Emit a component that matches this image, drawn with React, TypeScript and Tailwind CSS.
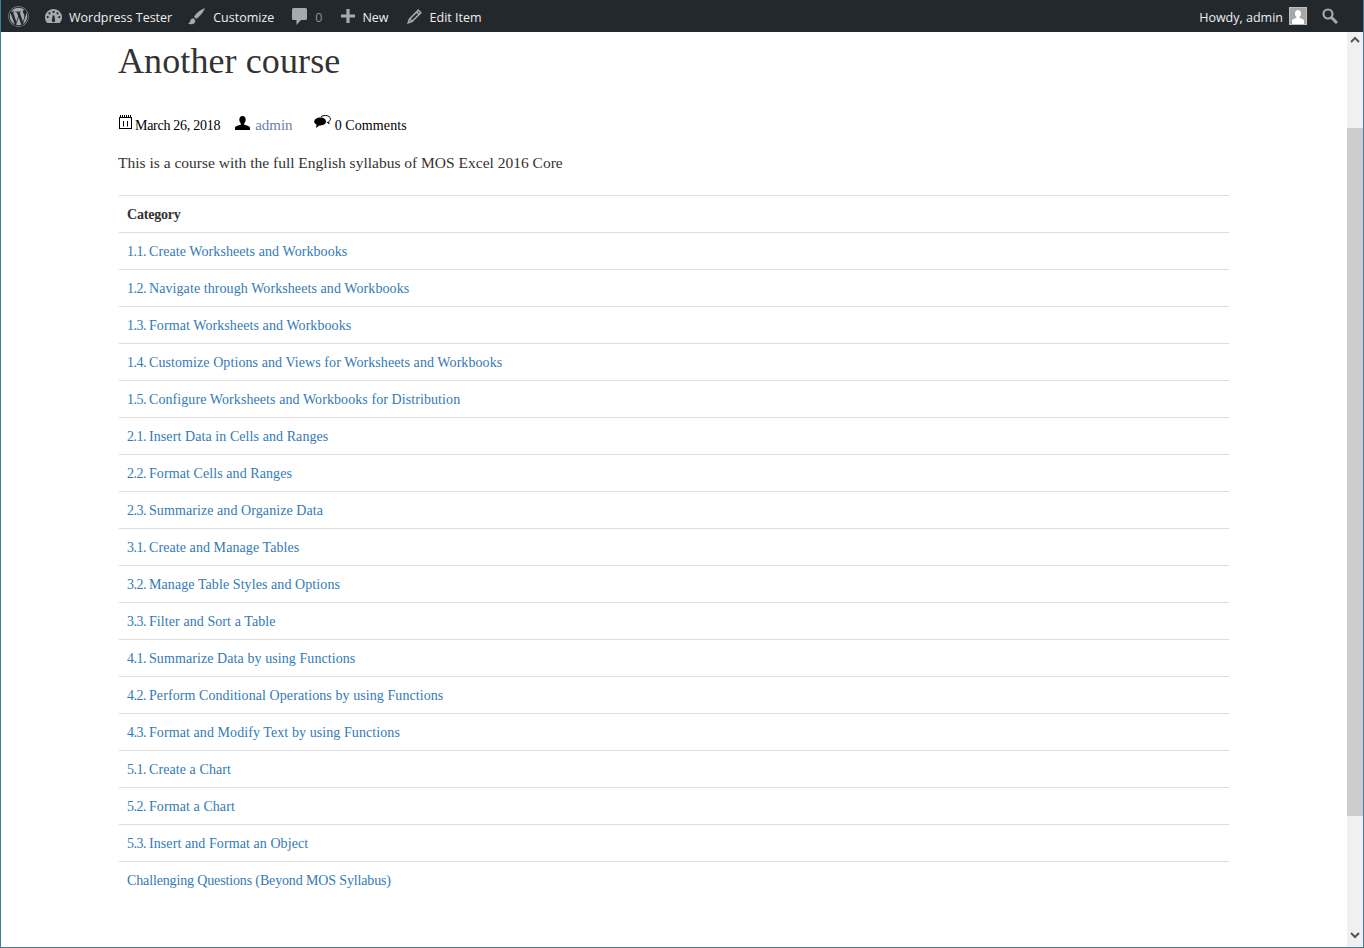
import { FaWordpress } from "react-icons/fa";

const rows = [
  ["1.1.", "Create Worksheets and Workbooks"],
  ["1.2.", "Navigate through Worksheets and Workbooks"],
  ["1.3.", "Format Worksheets and Workbooks"],
  ["1.4.", "Customize Options and Views for Worksheets and Workbooks"],
  ["1.5.", "Configure Worksheets and Workbooks for Distribution"],
  ["2.1.", "Insert Data in Cells and Ranges"],
  ["2.2.", "Format Cells and Ranges"],
  ["2.3.", "Summarize and Organize Data"],
  ["3.1.", "Create and Manage Tables"],
  ["3.2.", "Manage Table Styles and Options"],
  ["3.3.", "Filter and Sort a Table"],
  ["4.1.", "Summarize Data by using Functions"],
  ["4.2.", "Perform Conditional Operations by using Functions"],
  ["4.3.", "Format and Modify Text by using Functions"],
  ["5.1.", "Create a Chart"],
  ["5.2.", "Format a Chart"],
  ["5.3.", "Insert and Format an Object"],
];

const CalendarIcon = () => (
  <svg className="mb-[6px]" width="14" height="15" viewBox="0 0 14 15" fill="none" stroke="#000" strokeWidth="1">
    <path d="M1.500 0v2M3.500 0v2M5.500 0v2M7.500 0v2M9.500 0v2M11.500 0v2" />
    <rect x="0.500" y="2.500" width="12" height="11" />
    <path d="M4.500 6v5.500M8.500 6v5.500" />
  </svg>
);

const PersonIcon = () => (
  <svg className="mb-[5px]" width="15" height="14" viewBox="0 0 15 14" fill="#000">
    <path d="M7.500 0C9.500 0 10.700 1.500 10.700 3.600c0 1.500-.6 3-1.500 3.800v1.300c2.500.6 4.900 1.500 5.800 2.600V14H0v-2.700c.9-1.100 3.300-2 5.800-2.600V7.400c-.9-.8-1.500-2.300-1.500-3.800C4.300 1.500 5.500 0 7.500 0z" />
  </svg>
);

const CommentsIcon = () => (
  <svg className="mb-[6px]" width="17" height="14" viewBox="0 0 17 14">
    <path d="M6.500 2.500C3 2.500.2 4.200.2 6.500c0 1.400 1 2.500 2.400 3.200L2 13l3.400-2.600h1.200c3 0 5.400-1.700 5.400-3.900S9.800 2.500 6.500 2.500z" fill="#000" />
    <path d="M7 1.700C8 .9 9.500.5 11.300.5c2.900 0 5.200 1.500 5.200 3.400 0 1-.7 2-1.900 2.600l.5 2.200-2.200-1.700" fill="none" stroke="#000" />
  </svg>
);

const BubbleIcon = () => (
  <svg width="15" height="17" viewBox="0 0 15 17" fill="#a7aaad">
    <path d="M1.500 0h12A1.500 1.500 0 0 1 15 1.500v9a1.500 1.500 0 0 1-1.500 1.500H9l-4.500 5v-5h-3A1.500 1.500 0 0 1 0 10.500v-9A1.500 1.500 0 0 1 1.500 0z" />
  </svg>
);

const GaugeIcon = () => (
  <svg width="17" height="14" viewBox="0 0 17 14" fill="#a7aaad">
    <path fillRule="evenodd" d="M8.500 0C3.800 0 0 3.700 0 8.300c0 2 .7 3.900 1.900 5.300l.4.400h12.400l.4-.4A8.200 8.200 0 0 0 17 8.300C17 3.700 13.200 0 8.500 0zM8.500 1.800a1.100 1.100 0 1 1 0 2.200 1.100 1.100 0 0 1 0-2.200zM4.500 3.200a1.100 1.100 0 1 1 0 2.200 1.100 1.100 0 0 1 0-2.200zM12.500 3.200a1.100 1.100 0 1 1 0 2.200 1.100 1.100 0 0 1 0-2.200zM2.700 7a1.100 1.100 0 1 1 0 2.200 1.100 1.100 0 0 1 0-2.200zM14.300 7a1.100 1.100 0 1 1 0 2.200 1.100 1.100 0 0 1 0-2.200zM7.600 6.500l1.800 0 .6 4.500a1.600 1.600 0 1 1-3 0z" />
  </svg>
);

const BrushIcon = () => (
  <svg width="17" height="17" viewBox="0 0 17 17" fill="#a7aaad">
    <path d="M17 0c-3.500 1.200-8 4.500-10.300 7.800-.5.700-.6 1.100-.4 1.500l1.500 1.300c.5.200 1 0 1.600-.5C12.500 7.500 15.800 3.500 17 0z" />
    <path d="M5.300 10.300c-1.600.2-2.600 1-3 2.500C2 14.300 1.200 15 0 15.500c2.600 1.400 5.800 1 7-1.200.4-.8.4-1.600.1-2.300z" />
  </svg>
);

const PencilIcon = () => (
  <svg width="15" height="15" viewBox="0 0 15 15" fill="none" stroke="#a7aaad" strokeWidth="1.600">
    <path d="M11.300 1.200l2.500 2.500-8.900 8.900-3.700 1.200 1.200-3.700z" />
    <path d="M3.200 10.200l1.600 1.600" />
    <path d="M9.500 3l2.500 2.500" />
  </svg>
);

const PlusIcon = () => (
  <svg width="14" height="14" viewBox="0 0 14 14" fill="#a7aaad">
    <path d="M5.400 0h3.200v5.400H14v3.200H8.600V14H5.400V8.600H0V5.400h5.400z" />
  </svg>
);

const SearchIcon = () => (
  <svg width="16" height="16" viewBox="0 0 16 16" fill="none" stroke="#a7aaad">
    <circle cx="6" cy="6" r="4.500" strokeWidth="2.200" />
    <path d="M9.500 9.500l5.500 5.500" strokeWidth="3" />
  </svg>
);

const AvatarIcon = () => (
  <svg className="ml-[6px]" width="18" height="18" viewBox="0 0 18 18">
    <rect width="18" height="18" fill="#a7a7a7" />
    <rect x="0.500" y="0.500" width="17" height="17" fill="none" stroke="#bdbdbd" />
    <path d="M9 3c1.900 0 3 1.500 3 3.500 0 1.300-.5 2.700-1.400 3.500v1c1.700.4 3.800 1.200 4.400 2.300V17H3v-3.700c.6-1.100 2.700-1.900 4.400-2.300v-1C6.500 9.200 6 7.800 6 6.500 6 4.500 7.100 3 9 3z" fill="#fff" />
  </svg>
);

function BarItem({ icon, label, gap, muted }: { icon: React.ReactNode; label: string; gap: string; muted?: boolean }) {
  return (
    <div className={`flex items-center ${gap}`}>
      {icon}
      <span className={muted ? "text-[#8c8f94] pt-[5px]" : "text-[#eee] pt-[5px]"}>{label}</span>
    </div>
  );
}

export default function App() {
  return (
    <div className="h-[948px] overflow-hidden flex flex-col border-x border-b border-[#3e7f9f] bg-white">
      <header className="h-8 shrink-0 -mx-px flex items-center justify-between bg-[#23282d] text-[12.5px] font-['Open_Sans',sans-serif] pl-[8px] pr-[26px]">
        <div className="flex items-center gap-[16px]">
          <FaWordpress className="text-[#a7aaad]" size={21} />
          <BarItem gap="gap-[7px]" icon={<GaugeIcon />} label="Wordpress Tester" />
          <BarItem gap="gap-[8px]" icon={<BrushIcon />} label="Customize" />
          <div className="ml-[2px]">
            <BarItem gap="gap-[8px]" icon={<BubbleIcon />} label="0" muted />
          </div>
          <div className="ml-[3px]">
            <BarItem gap="gap-[7px]" icon={<PlusIcon />} label="New" />
          </div>
          <div className="ml-[2px]">
            <BarItem gap="gap-[8px]" icon={<PencilIcon />} label="Edit Item" />
          </div>
        </div>
        <div className="flex items-center">
          <span className="text-[#eee] pt-[5px]">Howdy, admin</span>
          <AvatarIcon />
          <div className="ml-[15px] mb-[1px]">
            <SearchIcon />
          </div>
        </div>
      </header>

      <div className="flex-1 min-h-0 flex">
        <main className="flex-1 pl-[117px] pr-[118px] font-['Liberation_Serif',serif]">
          <h1 className="text-[36px] leading-[40px] pt-[9px] text-[#333] tracking-[0.1px]">Another course</h1>
          <div className="flex items-center text-[14px] text-black mt-[34px] h-[20px] pl-px">
            <CalendarIcon />
            <span className="ml-[2px] tracking-[-0.28px]">March 26, 2018</span>
            <span className="ml-[15px]"><PersonIcon /></span>
            <span className="ml-[5px] text-[15px] text-[#6b7fa8]">admin</span>
            <span className="ml-[21px]"><CommentsIcon /></span>
            <span className="ml-[4px] tracking-[0.1px]">0 Comments</span>
          </div>
          <p className="text-[15.5px] leading-[24px] text-[#333] mt-[16px]">
            This is a course with the full English syllabus of MOS Excel 2016 Core
          </p>
          <div className="pl-px mt-[20px]">
            <table className="w-full text-[14px] border-collapse">
              <thead>
                <tr className="border-t border-[#ddd] h-[37px]">
                  <th className="text-left px-[8px] font-bold text-[#333] tracking-[-0.2px]">Category</th>
                </tr>
              </thead>
              <tbody>
                {rows.map(([num, text]) => (
                  <tr key={num} className="border-t border-[#ddd] h-[37px]">
                    <td className="px-[8px]">
                      <a href="#" className="text-[#337ab7] tracking-[0.08px]">
                        <span className="tracking-[-0.5px]">{num} </span>
                        {text}
                      </a>
                    </td>
                  </tr>
                ))}
                <tr className="border-t border-[#ddd] h-[37px]">
                  <td className="px-[8px]">
                    <a href="#" className="text-[#337ab7] tracking-[-0.14px]">Challenging Questions (Beyond MOS Syllabus)</a>
                  </td>
                </tr>
              </tbody>
            </table>
          </div>
        </main>
        <div className="w-[16px] shrink-0 bg-[#f0f0f0] flex flex-col items-center">
          <svg className="mt-[4px]" width="10" height="8" viewBox="0 0 10 8" fill="none" stroke="#555" strokeWidth="2"><path d="M1 6l4-4 4 4" /></svg>
          <div className="mt-[84px] w-full h-[688px] bg-[#cdcdcd]" />
          <svg className="mt-[115px]" width="10" height="8" viewBox="0 0 10 8" fill="none" stroke="#555" strokeWidth="2"><path d="M1 2l4 4 4-4" /></svg>
        </div>
      </div>
    </div>
  );
}
